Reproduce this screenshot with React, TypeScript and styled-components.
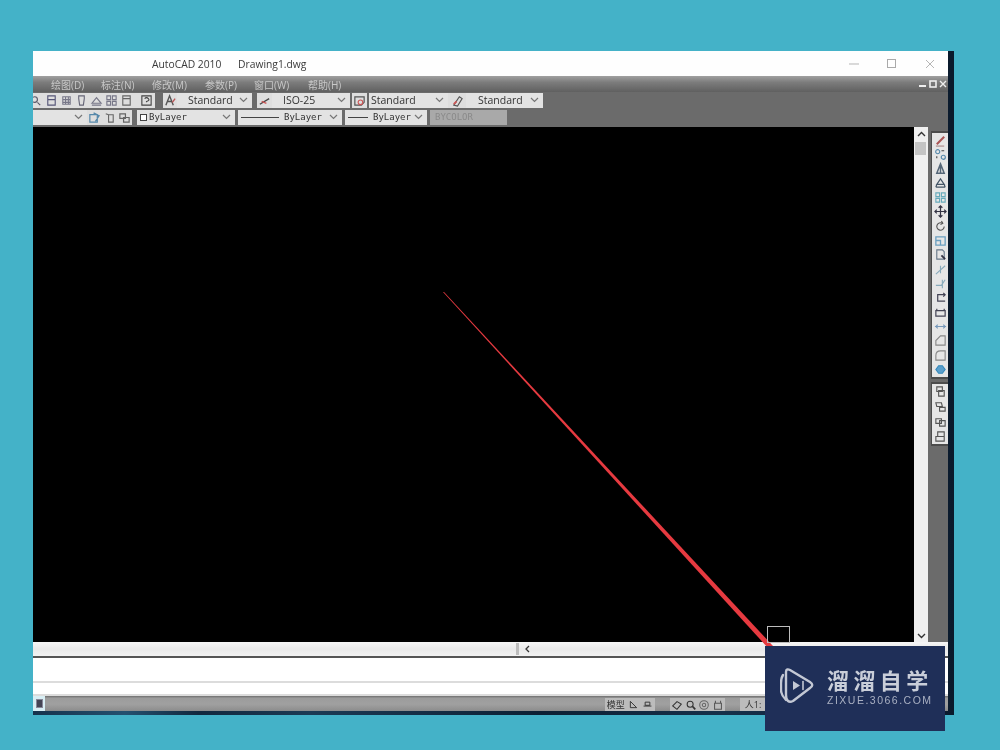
import React from "react";
import styled, { createGlobalStyle } from "styled-components";

const Global = createGlobalStyle`
  html, body { margin: 0; padding: 0; background: #44b2c8; }
  body { width: 1000px; height: 750px; overflow: hidden; }
`;

const UI = `"Open Sans", "Noto Sans CJK SC", sans-serif`;

const Page = styled.div`
  width: 1000px;
  height: 750px;
  padding: 51px 46px 0 33px;
  box-sizing: border-box;
  background: #44b2c8;
  position: relative;
`;

const Desk = styled.div`
  width: 921px;
  height: 664px;
  background: linear-gradient(90deg, #16324c, #24506f 10%, #12283e 18%, #1c3a54 30%, #0d2034 55%, #16304a 75%, #0a1a2c);
  display: flex;
  flex-direction: column;
  position: relative;
  filter: blur(0.45px);
`;

const AppWindow = styled.div`
  width: 915px;
  height: 659px;
  display: flex;
  flex-direction: column;
  background: #6b6b6b;
`;

const TitleBar = styled.div`
  height: 25px;
  flex: none;
  background: #fefefe;
  display: flex;
  align-items: center;
  padding: 0 13px 0 119px;
  font: 10.3px ${UI};
  color: #3a3a3a;
`;
const TitleApp = styled.span`
  width: 86px;
`;
const TitleDoc = styled.span`
  flex: 1;
`;
const WinButtons = styled.div`
  display: flex;
  gap: 28px;
  align-items: center;
`;

const MenuBar = styled.div`
  height: 16px;
  flex: none;
  background: linear-gradient(#a0a0a0 0, #7c7c7c 40%, #606060 100%);
  display: flex;
  align-items: center;
  padding-left: 18px;
  gap: 17px;
  font: 10px ${UI};
  color: #c8c8c8;
`;
const MenuItem = styled.span<{ $w: number }>`
  width: ${(p) => p.$w}px;
  white-space: nowrap;
`;
const MdiButtons = styled.div`
  margin-left: auto;
  margin-right: 1px;
  display: flex;
  gap: 1px;
  align-items: center;
`;

const ToolRow = styled.div<{ $h: number }>`
  height: ${(p) => p.$h}px;
  flex: none;
  display: flex;
  align-items: center;
  background: #6b6b6b;
`;
const IconStrip = styled.div<{ $w: number; $ml?: number }>`
  width: ${(p) => p.$w}px;
  margin-left: ${(p) => p.$ml ?? 0}px;
  height: 15px;
  flex: none;
  background: #dedede;
  display: flex;
  align-items: center;
  justify-content: space-around;
  overflow: hidden;
`;
const LeadStrip = styled(IconStrip)`
  justify-content: flex-start;
  gap: 2px;
  svg:first-child {
    margin-left: -3px;
  }
  svg:last-child {
    margin-left: 5px;
  }
`;
const Combo = styled.div<{ $w: number; $ml?: number; $off?: boolean; $left?: number }>`
  width: ${(p) => p.$w}px;
  margin-left: ${(p) => p.$ml ?? 0}px;
  height: 15px;
  flex: none;
  box-sizing: border-box;
  background: ${(p) => (p.$off ? "#a9a9a9" : "#e3e3e3")};
  color: ${(p) => (p.$off ? "#8a8a8a" : "#333")};
  display: flex;
  align-items: center;
  padding: 0 4px 0 ${(p) => p.$left ?? 0}px;
  font: 10.5px ${UI};
  white-space: nowrap;
`;
const ComboText = styled.span`
  flex: 1;
`;
const LayerText = styled.span`
  flex: 1;
  font: 9px "DejaVu Sans Mono", monospace;
  display: flex;
  align-items: center;
  gap: 2px;
`;
const Swatch = styled.i`
  width: 5px;
  height: 5px;
  border: 1px solid #444;
  background: #fff;
  flex: none;
`;
const Rule = styled.i<{ $w: number }>`
  width: ${(p) => p.$w}px;
  height: 1px;
  background: #444;
  flex: none;
  margin-right: 3px;
`;
const Chev = styled.svg`
  width: 9px;
  height: 6px;
  flex: none;
`;

const Middle = styled.div`
  height: 515px;
  flex: none;
  margin-top: 1px;
  display: flex;
  background: #6b6b6b;
`;
const Canvas = styled.div`
  width: 881px;
  background: #000;
  flex: none;
`;
const VScroll = styled.div`
  width: 14px;
  flex: none;
  background: #f0f0f0;
  display: flex;
  flex-direction: column;
  align-items: center;
  justify-content: space-between;
  padding: 4px 0 3px;
  box-sizing: border-box;
  position: relative;
`;
const VThumb = styled.div`
  width: 11px;
  height: 13px;
  background: #c4c4c4;
  position: absolute;
  top: 15px;
  left: 1px;
`;
const SideDock = styled.div`
  flex: 1;
  padding: 4px 0 0 3px;
  display: flex;
  flex-direction: column;
  gap: 3px;
`;
const SideGroup = styled.div<{ $h: number }>`
  width: 17px;
  height: ${(p) => p.$h}px;
  box-sizing: border-box;
  background: #e6e6e6;
  display: flex;
  flex-direction: column;
  justify-content: space-around;
  align-items: center;
  border: solid #4c4c4c;
  border-width: 2px 0 2px 1px;
`;

const HScroll = styled.div`
  height: 14px;
  flex: none;
  background: linear-gradient(#f6f6f6, #e9e9e9 50%, #f2f2f2);
  display: flex;
  align-items: center;
  padding-left: 483px;
  border-bottom: 2px solid #555;
`;
const HMark = styled.i`
  width: 3px;
  height: 12px;
  background: #bdbdbd;
  margin-right: 6px;
`;
const CmdLine = styled.div<{ $h: number }>`
  height: ${(p) => p.$h}px;
  flex: none;
  background: #fff;
  border-bottom: 2px solid #dcdcdc;
  box-sizing: border-box;
`;
const StatusBar = styled.div`
  flex: 1;
  background: linear-gradient(#6e6e6e 0, #9c9c9c 15%, #a0a0a0 55%, #8c8c8c 100%);
  display: flex;
  align-items: stretch;
  padding-top: 2px;
`;
const StatusCorner = styled.div`
  width: 12px;
  background: #d8eef4;
  margin-top: -2px;
  display: flex;
  align-items: center;
  justify-content: center;
`;
const StatusChip = styled.i`
  width: 5px;
  height: 7px;
  background: #445;
  border: 1px solid #889;
`;
const StatusGroup = styled.div<{ $ml: number; $w: number }>`
  margin-left: ${(p) => p.$ml}px;
  width: ${(p) => p.$w}px;
  background: #bcbcbc;
  display: flex;
  align-items: center;
  justify-content: space-around;
  font: 9px ${UI};
  color: #333;
  white-space: nowrap;
`;

const Pointer = styled.svg`
  position: absolute;
  left: 0;
  top: 0;
  width: 921px;
  height: 664px;
  pointer-events: none;
`;

const Watermark = styled.div`
  position: absolute;
  left: 765px;
  top: 646px;
  width: 180px;
  height: 85px;
  background: #1f2f58;
  display: flex;
  align-items: center;
  padding: 0 0 6px 15px;
  box-sizing: border-box;
  gap: 13px;
  filter: blur(0.35px);
`;
const MarkText = styled.div`
  display: flex;
  flex-direction: column;
  gap: 2px;
  color: #c9ced9;
`;
const MarkTitle = styled.div`
  font: 700 22px "Noto Sans CJK SC", sans-serif;
  line-height: 26px;
  letter-spacing: 4.4px;
  white-space: nowrap;
`;
const MarkUrl = styled.div`
  font: 10.5px "Liberation Sans", sans-serif;
  letter-spacing: 1.5px;
  white-space: nowrap;
  color: #a9b0c2;
`;

const Chevron = () => (
  <Chev viewBox="0 0 9 6">
    <path d="M1 1l3.5 3.5L8 1" fill="none" stroke="#777" strokeWidth="1.2" />
  </Chev>
);

const Ico = ({ children, s = 13 }: { children: React.ReactNode; s?: number }) => (
  <svg width={s} height={s} viewBox="0 0 14 14" fill="none" strokeWidth="1.2" stroke="#556" style={{ flex: "none" }}>
    {children}
  </svg>
);

const topIcons: React.ReactNode[] = [
  <><circle cx="5" cy="6" r="3" /><path d="M8 9l3 3" /></>,
  <path d="M3 2h8v10H3zM3 6h8" stroke="#557" />,
  <path d="M3 3h8v8H3zM3 6h8M3 9h8M6 3v8M9 3v8" stroke="#778" />,
  <path d="M4 2h6v3l-1 7H5L4 5z" stroke="#667" />,
  <path d="M2 10l5-6 5 6zM2 12h10" stroke="#778" />,
  <path d="M2 2h4v4H2zM8 2h4v4H8zM2 8h4v4H2zM8 8h4v4H8z" stroke="#778" />,
  <path d="M3 2h8v10H3zM3 5h8" stroke="#666" />,
];

const sideIcons: React.ReactNode[] = [
  <><path d="M3 11L11 3" stroke="#a55" strokeWidth="2.2" /><path d="M2 13h9" stroke="#a88" /></>,
  <><circle cx="4" cy="4" r="2.2" stroke="#58a" /><circle cx="10" cy="10" r="2.2" stroke="#58a" /><path d="M8 3h3M3 9v2" stroke="#444" /></>,
  <path d="M7 2l4 10H3zM7 2v10" stroke="#567" strokeWidth="1.6" />,
  <path d="M7 2l4 6H3zM2 11h10M3 8l-1 3M11 8l1 3" stroke="#456" strokeWidth="1.3" />,
  <path d="M2 2h4v4H2zM8 2h4v4H8zM2 8h4v4H2zM8 8h4v4H8z" stroke="#6ab" />,
  <path d="M7 1v12M1 7h12M5 3l2-2 2 2M5 11l2 2 2-2M3 5L1 7l2 2M11 5l2 2-2 2" stroke="#334" strokeWidth="1.3" />,
  <path d="M11 7a4 4 0 1 1-2-3.5M8 1l1.5 2.5L7 5" stroke="#555" />,
  <path d="M2 3h10v9H2zM2 7h5v5" stroke="#6a9fc0" strokeWidth="1.4" />,
  <><path d="M3 2h6l2 2v8H3z" stroke="#678" /><path d="M8 8l4 4" stroke="#334" strokeWidth="2" /></>,
  <path d="M2 12L12 3M7 3v8" stroke="#8ab" />,
  <path d="M2 9h6l4-6M9 3v9" stroke="#8ab" />,
  <path d="M12 4H4v7h8M10 2l2 2-2 2" stroke="#445" strokeWidth="1.3" />,
  <path d="M3 3v2M11 3v2M2 5h10v6H2z" stroke="#445" strokeWidth="1.3" />,
  <path d="M1 7h12M4 5L2 7l2 2M10 5l2 2-2 2" stroke="#79b" />,
  <path d="M2 12V7l5-5h5v10z" stroke="#888" />,
  <path d="M2 12V7q0-5 5-5h5v10z" stroke="#888" />,
  <path d="M2 7l3-4h4l3 4-3 4H5z" stroke="#38b" fill="#5a9fcc" />,
];
const layerIcons: React.ReactNode[] = [
  <path d="M3 2h6v5H3zM5 6h6v6H5z" stroke="#555" />,
  <path d="M2 3h6l1 4H3zM6 8h6v4H6z" stroke="#555" />,
  <path d="M2 4h6v5H2zM6 6h6v6H6z" stroke="#555" />,
  <path d="M4 2h7v5H4zM2 7h9v5H2z" stroke="#555" />,
];

const menus: [string, number][] = [
  ["绘图(D)", 33],
  ["标注(N)", 34],
  ["修改(M)", 36],
  ["参数(P)", 32],
  ["窗口(W)", 37],
  ["帮助(H)", 33],
];

export default function App() {
  return (
    <>
      <Global />
      <Page>
        <Desk>
          <AppWindow>
            <TitleBar>
              <TitleApp>AutoCAD 2010</TitleApp>
              <TitleDoc>Drawing1.dwg</TitleDoc>
              <WinButtons>
                <svg width="10" height="10" viewBox="0 0 10 10"><path d="M0 5h10" stroke="#b5b5b5" /></svg>
                <svg width="10" height="10" viewBox="0 0 10 10"><rect x=".5" y=".5" width="8" height="8" fill="none" stroke="#aaa" /></svg>
                <svg width="10" height="10" viewBox="0 0 10 10"><path d="M1 1l8 8M9 1l-8 8" stroke="#b5b5b5" /></svg>
              </WinButtons>
            </TitleBar>

            <MenuBar>
              {menus.map(([m, w]) => (
                <MenuItem key={m} $w={w}>{m}</MenuItem>
              ))}
              <MdiButtons>
                <svg width="10" height="8" viewBox="0 0 10 8"><path d="M1 6h7" stroke="#eee" strokeWidth="2" /></svg>
                <svg width="9" height="8" viewBox="0 0 9 8"><rect x="1" y="1" width="6" height="6" fill="none" stroke="#eee" strokeWidth="1.6" /></svg>
                <svg width="8" height="8" viewBox="0 0 8 8"><path d="M1 1l6 6M7 1L1 7" stroke="#eee" strokeWidth="1.4" /></svg>
              </MdiButtons>
            </MenuBar>

            <ToolRow $h={16}>
              <LeadStrip $w={122}>
                {topIcons.map((ic, i) => <Ico key={i}>{ic}</Ico>)}
                <Ico><path d="M2 2h10v10H2zM5 5q2-2 4 0t-2 3v1" stroke="#444" /></Ico>
              </LeadStrip>
              <IconStrip $w={14} $ml={8}>
                <Ico><path d="M2 12L6 2l4 10M3 8h6" stroke="#555" strokeWidth="1.5" /><path d="M9 9l3-4" stroke="#b55" strokeWidth="1.5" /></Ico>
              </IconStrip>
              <Combo $w={75} $left={11}><ComboText>Standard</ComboText><Chevron /></Combo>
              <IconStrip $w={15} $ml={5}>
                <Ico><path d="M2 11L12 5" stroke="#444" strokeWidth="1.4" /><path d="M4 8l5 2" stroke="#c55" strokeWidth="1.5" /></Ico>
              </IconStrip>
              <Combo $w={78} $left={11}><ComboText>ISO-25</ComboText><Chevron /></Combo>
              <IconStrip $w={15} $ml={2}>
                <Ico><path d="M2 3h10v6l-3 3H2z" stroke="#555" strokeWidth="1.3" /><circle cx="8" cy="9" r="2.5" stroke="#c55" /></Ico>
              </IconStrip>
              <Combo $w={79} $ml={2} $left={2}><ComboText>Standard</ComboText><Chevron /></Combo>
              <IconStrip $w={18}>
                <Ico><path d="M3 12l6-9 3 2-5 8z" stroke="#555" /><path d="M3 11l3-3" stroke="#c55" strokeWidth="2" /></Ico>
              </IconStrip>
              <Combo $w={77} $left={12}><ComboText>Standard</ComboText><Chevron /></Combo>
            </ToolRow>

            <ToolRow $h={18}>
              <Combo $w={54}><ComboText /><Chevron /></Combo>
              <IconStrip $w={45}>
                <Ico><path d="M2 4h8v8H2zM6 2l6 3-4 6" stroke="#58a" strokeWidth="1.3" /></Ico>
                <Ico><path d="M3 3l3 1M6 4h5v8H6z" stroke="#666" /></Ico>
                <Ico><path d="M2 3h6v5H2zM6 7h6v5H6z" stroke="#666" strokeWidth="1.3" /></Ico>
              </IconStrip>
              <Combo $w={98} $ml={5} $left={3}><LayerText><Swatch />ByLayer</LayerText><Chevron /></Combo>
              <Combo $w={104} $ml={3} $left={3}><LayerText><Rule $w={38} />ByLayer</LayerText><Chevron /></Combo>
              <Combo $w={82} $ml={3} $left={3}><LayerText><Rule $w={20} />ByLayer</LayerText><Chevron /></Combo>
              <Combo $w={77} $ml={3} $off $left={5}><LayerText>BYCOLOR</LayerText></Combo>
            </ToolRow>

            <Middle>
              <Canvas />
              <VScroll>
                <svg width="9" height="6" viewBox="0 0 9 6"><path d="M1 5l3.5-3.5L8 5" fill="none" stroke="#333" strokeWidth="1.4" /></svg>
                <VThumb />
                <svg width="9" height="6" viewBox="0 0 9 6"><path d="M1 1l3.5 3.5L8 1" fill="none" stroke="#333" strokeWidth="1.4" /></svg>
              </VScroll>
              <SideDock>
                <SideGroup $h={248}>
                  {sideIcons.map((ic, i) => <Ico key={i}>{ic}</Ico>)}
                </SideGroup>
                <SideGroup $h={64}>
                  {layerIcons.map((ic, i) => <Ico key={i}>{ic}</Ico>)}
                </SideGroup>
              </SideDock>
            </Middle>

            <HScroll>
              <HMark />
              <svg width="5" height="8" viewBox="0 0 5 8"><path d="M4 1L1 4l3 3" fill="none" stroke="#333" strokeWidth="1.3" /></svg>
            </HScroll>
            <CmdLine $h={25} />
            <CmdLine $h={13} />
            <StatusBar>
              <StatusCorner><StatusChip /></StatusCorner>
              <StatusGroup $ml={560} $w={50}>
                模型
                <Ico s={11}><path d="M3 3l8 8H3z" stroke="#333" /></Ico>
                <Ico s={11}><path d="M2 9h10M4 4h6v4H4z" stroke="#333" /></Ico>
              </StatusGroup>
              <StatusGroup $ml={15} $w={55}>
                <Ico s={12}><path d="M2 8l5-5 5 3-5 6z" stroke="#333" /></Ico>
                <Ico s={12}><circle cx="6" cy="6" r="3.5" stroke="#333" /><path d="M9 9l3 3" stroke="#333" strokeWidth="2" /></Ico>
                <Ico s={12}><circle cx="7" cy="7" r="5" stroke="#666" /><circle cx="7" cy="7" r="2" stroke="#666" /></Ico>
                <Ico s={12}><path d="M3 5h8v7H3zM4 2v3M10 2v3" stroke="#555" /></Ico>
              </StatusGroup>
              <StatusGroup $ml={15} $w={26}>人1:</StatusGroup>
            </StatusBar>
          </AppWindow>

          <Pointer viewBox="0 0 921 664">
            <polygon points="410,241 411,241 740,595 735,597" fill="#e63a40" />
            <rect x="734.5" y="575.5" width="22" height="16" fill="none" stroke="#bdbdbd" />
          </Pointer>
        </Desk>

        <Watermark>
          <svg width="34" height="36" viewBox="0 0 34 36" fill="none" stroke="#c3c8d4" strokeWidth="2.4" strokeLinejoin="round" strokeLinecap="round">
            <path d="M3 7C1 10 1 12 1 15v7c0 4 2 7 5 10" />
            <path d="M6 27V4c0-3 2-3 4-2l20 12c3 2 3 4 0 6L13 33c-4 2-7 0-7-6z" />
            <path d="M13 13l7 4.5-7 4.5z" fill="#c3c8d4" stroke="none" />
            <path d="M23 13.5v8" strokeWidth="1.6" />
          </svg>
          <MarkText>
            <MarkTitle>溜溜自学</MarkTitle>
            <MarkUrl>ZIXUE.3066.COM</MarkUrl>
          </MarkText>
        </Watermark>
      </Page>
    </>
  );
}
